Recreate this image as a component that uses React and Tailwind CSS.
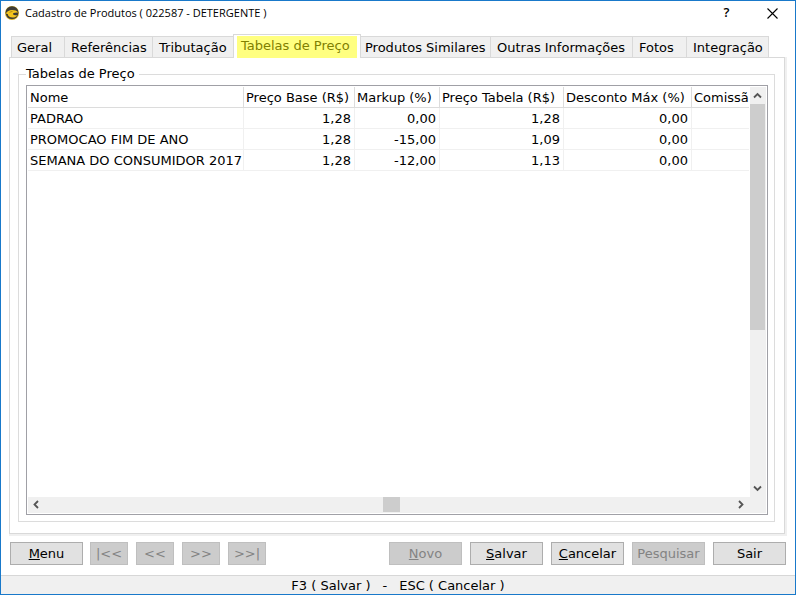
const TABS = [
  { label: 'Geral', width: 'w-[53px]' },
  { label: 'Referências', width: 'w-[88px]' },
  { label: 'Tributação', width: 'w-[81px]' },
  { label: 'Tabelas de Preço', active: true },
  { label: 'Produtos Similares', width: 'w-[129px]' },
  { label: 'Outras Informações', width: 'w-[142px]' },
  { label: 'Fotos', width: 'w-[54px]' },
  { label: 'Integração', width: 'w-[83px]' },
];

const COLUMNS = ['Nome', 'Preço Base (R$)', 'Markup (%)', 'Preço Tabela (R$)', 'Desconto Máx (%)', 'Comissã'];

const ROWS = [
  ['PADRAO', '1,28', '0,00', '1,28', '0,00', ''],
  ['PROMOCAO FIM DE ANO', '1,28', '-15,00', '1,09', '0,00', ''],
  ['SEMANA DO CONSUMIDOR 2017', '1,28', '-12,00', '1,13', '0,00', ''],
];

function AppIcon() {
  return (
    <svg viewBox="0 0 14 14" className="size-[14px] shrink-0" aria-hidden="true">
      <circle cx="7" cy="7" r="7" fill="#d9b021" />
      <circle cx="7" cy="6.6" r="6.4" fill="#3d3b36" />
      <path d="M.8 7.6C2 5 4.300 3.900 7 3.900c2.800 0 5.200.7 6.300 2.700-1.600-.2-3.500-.1-4.700.5-1 .6-.6 1.700.5 2 1 .3 2 .3 3.100.2-1 1.500-2.600 2.400-4.700 2.300C4.600 11.500 2.800 10 2.900 8.300 2.200 7.900 1.500 7.700.8 7.600z" fill="#f4c51e" />
      <path d="M4.500 6.600c.9-.8 1.900-1.100 3-1.100" stroke="#a37d14" strokeWidth=".8" fill="none" />
    </svg>
  );
}

function Arrow({ d }) {
  return (
    <svg viewBox="0 0 9 9" className="size-[9px]" fill="none" stroke="#555555" strokeWidth="1.8" aria-hidden="true">
      <path d={d} />
    </svg>
  );
}

function Button({ children, narrow, disabled }) {
  return (
    <button
      type="button"
      disabled={disabled}
      className={`flex h-[23px] shrink-0 items-center justify-center border leading-4 ${narrow ? 'w-[38px]' : 'w-[73px]'} ${
        disabled ? 'border-[#bfbfbf] bg-[#cccccc] text-[#838383]' : 'border-[#adadad] bg-[#e1e1e1] text-black'
      }`}
    >
      <span>{children}</span>
    </button>
  );
}

function Tab({ label, width, active }) {
  if (active) {
    return (
      <button
        type="button"
        role="tab"
        aria-selected="true"
        className="z-10 -mb-px flex h-6 w-32 shrink-0 border border-b-0 border-[#d9d9d9] bg-white px-[3px] pt-px"
      >
        <span className="h-[22px] w-[120px] bg-[#ffff80] pl-1 text-left leading-5 whitespace-nowrap text-[#808000]">{label}</span>
      </button>
    );
  }
  return (
    <button
      type="button"
      role="tab"
      aria-selected="false"
      className={`h-[21px] shrink-0 border-t border-l border-[#d9d9d9] bg-[#f0f0f0] pl-[6px] text-left leading-[22px] whitespace-nowrap last:border-r first-of-type:pl-[5px] nth-5:border-l-0 nth-5:pl-1 ${width}`}
    >
      {label}
    </button>
  );
}

export default function App() {
  return (
    <div className="flex h-screen flex-col border border-[#1979ca] bg-white font-['Verdana','DejaVu_Sans',sans-serif] text-[13px] text-black">
      <header className="flex h-6 shrink-0 items-center pl-1 font-['Segoe_UI','Open_Sans',sans-serif] text-[11px]">
        <AppIcon />
        <h1 className="grow pl-[6px]">Cadastro de Produtos ( 022587 - DETERGENTE )</h1>
        <button type="button" aria-label="Ajuda" className="h-6 w-[45px] text-[13px] font-semibold">?</button>
        <button type="button" aria-label="Fechar" className="flex h-6 w-[46px] items-center justify-center">
          <svg viewBox="0 0 11 11" className="size-[11px]" stroke="#000" strokeWidth="1.1" aria-hidden="true">
            <path d="M.5.5l10 10M10.5.5l-10 10" />
          </svg>
        </button>
      </header>

      <main className="flex min-h-0 grow flex-col px-2 pt-[9px]">
        <div role="tablist" className="flex shrink-0 items-end pl-[2px]">
          {TABS.map((tab) => (
            <Tab key={tab.label} {...tab} />
          ))}
        </div>

        <section className="mr-[2px] flex min-h-0 grow flex-col border border-[#d9d9d9] pt-2 pr-[9px] pb-[11px] pl-2 shadow-[1px_1px_0_1px_#f0f0f0]">
          <fieldset className="flex min-h-0 min-w-0 grow flex-col border border-[#dcdcdc] pr-[6px] pb-[6px] pl-[7px]">
            <legend className="pr-1 leading-4">Tabelas de Preço</legend>
            <div className="mt-[3px] flex min-h-0 grow flex-col border border-[#a0a0a6] p-px">
              <div className="flex min-h-0 grow">
                <div className="min-w-0 grow overflow-hidden">
                  <table className="w-full table-fixed border-separate border-spacing-0 leading-[18px] whitespace-nowrap">
                    <colgroup>
                      <col className="w-[216px]" />
                      <col className="w-[111px]" />
                      <col className="w-[85px]" />
                      <col className="w-[124px]" />
                      <col className="w-[128px]" />
                      <col />
                    </colgroup>
                    <thead>
                      <tr>
                        {COLUMNS.map((c) => (
                          <th key={c} className="border-r border-b border-[#dcdcdc] p-0 pt-[2px] pl-[2px] text-left font-normal last:border-r-0">{c}</th>
                        ))}
                      </tr>
                    </thead>
                    <tbody>
                      {ROWS.map(([name, ...values]) => (
                        <tr key={name}>
                          <td className="border-r border-b border-[#f0f0f0] p-0 pt-[2px] pl-[2px]">{name}</td>
                          {values.map((v, i) => (
                            <td key={i} className="border-r border-b border-[#f0f0f0] p-0 pt-[2px] pr-[3px] text-right last:border-r-0">{v}</td>
                          ))}
                        </tr>
                      ))}
                    </tbody>
                  </table>
                </div>
                <div className="ml-px flex w-4 shrink-0 flex-col bg-[#f0f0f0] pr-px">
                  <button type="button" aria-label="Rolar para cima" className="flex h-[17px] shrink-0 items-center justify-center">
                    <Arrow d="M1 6.500L4.500 3 8 6.500" />
                  </button>
                  <div className="min-h-0 grow">
                    <div className="h-3/5 bg-[#cdcdcd]" />
                  </div>
                  <button type="button" aria-label="Rolar para baixo" className="flex h-[17px] shrink-0 items-center justify-center">
                    <Arrow d="M1 2.500L4.500 6 8 2.500" />
                  </button>
                </div>
              </div>
              <div className="flex h-4 shrink-0 bg-[#f0f0f0] pr-[17px] pb-px">
                <button type="button" aria-label="Rolar para a esquerda" className="flex w-[17px] items-center justify-center">
                  <Arrow d="M6 1L2.500 4.500 6 8" />
                </button>
                <div className="flex grow">
                  <div className="grow-[338]" />
                  <div className="w-[17px] bg-[#cdcdcd]" />
                  <div className="grow-[332]" />
                </div>
                <button type="button" aria-label="Rolar para a direita" className="flex w-[17px] items-center justify-center">
                  <Arrow d="M3 1l3.500 3.500L3 8" />
                </button>
              </div>
            </div>
          </fieldset>
        </section>

        <div className="flex shrink-0 justify-between pt-2 pr-px pb-[10px] pl-px">
          <div className="flex gap-2 [&>button:first-child]:mr-[-1px]">
            <Button><u>M</u>enu</Button>
            <Button narrow disabled>|&lt;&lt;</Button>
            <Button narrow disabled>&lt;&lt;</Button>
            <Button narrow disabled>&gt;&gt;</Button>
            <Button narrow disabled>&gt;&gt;|</Button>
          </div>
          <div className="flex gap-2">
            <Button disabled><u>N</u>ovo</Button>
            <Button><u>S</u>alvar</Button>
            <Button><u>C</u>ancelar</Button>
            <Button disabled>Pesquisar</Button>
            <Button>Sair</Button>
          </div>
        </div>
      </main>

      <footer className="flex h-[19px] shrink-0 justify-center gap-3 border-t border-[#d7d7d7] bg-[#f0f0f0] leading-5">
        <span>F3 ( Salvar )</span>
        <span>-</span>
        <span>ESC ( Cancelar )</span>
      </footer>
    </div>
  );
}
